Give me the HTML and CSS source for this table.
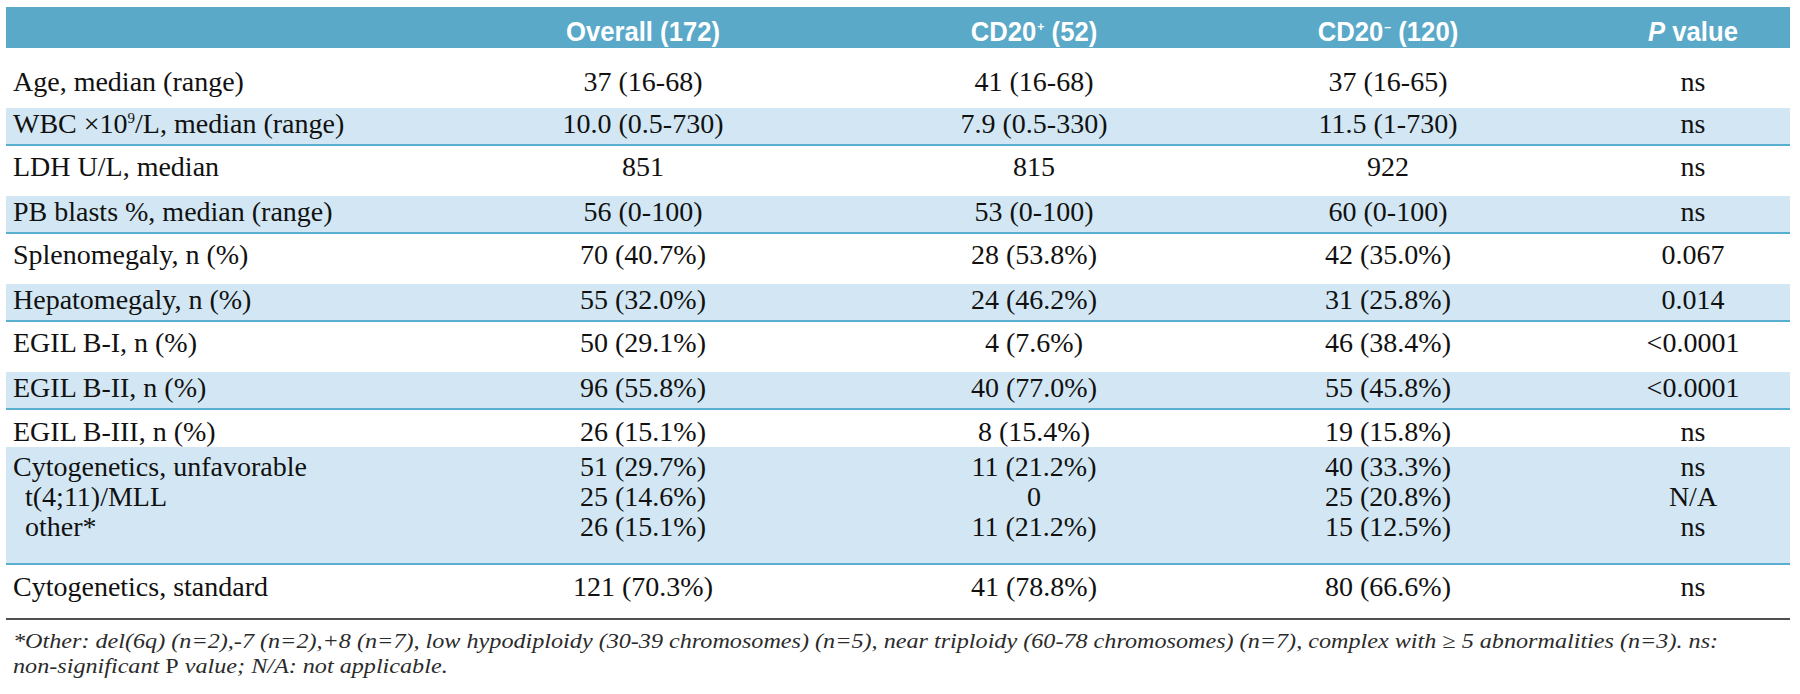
FILE: index.html
```html
<!DOCTYPE html>
<html lang="en">
<head>
<meta charset="utf-8">
<title>Table</title>
<link rel="stylesheet" href="styles.css">
</head>
<body>
<div class="page">
  <div class="tbl">
    <div class="row head">
      <div class="c lab"></div>
      <div class="c"><span class="t">Overall (172)</span></div>
      <div class="c"><span class="t">CD20<sup class="hs">+</sup> (52)</span></div>
      <div class="c"><span class="t">CD20<sup class="hs">–</sup> (120)</span></div>
      <div class="c p"><span class="t"><i>P</i> value</span></div>
    </div>

    <div class="row white first">
      <div class="c lab"><span class="t">Age, median (range)</span></div>
      <div class="c"><span class="t">37 (16-68)</span></div>
      <div class="c"><span class="t">41 (16-68)</span></div>
      <div class="c"><span class="t">37 (16-65)</span></div>
      <div class="c p"><span class="t">ns</span></div>
    </div>
    <div class="row band">
      <div class="c lab"><span class="t">WBC ×10<sup class="bs">9</sup>/L, median (range)</span></div>
      <div class="c"><span class="t">10.0 (0.5-730)</span></div>
      <div class="c"><span class="t">7.9 (0.5-330)</span></div>
      <div class="c"><span class="t">11.5 (1-730)</span></div>
      <div class="c p"><span class="t">ns</span></div>
    </div>

    <div class="row white">
      <div class="c lab"><span class="t">LDH U/L, median</span></div>
      <div class="c"><span class="t">851</span></div>
      <div class="c"><span class="t">815</span></div>
      <div class="c"><span class="t">922</span></div>
      <div class="c p"><span class="t">ns</span></div>
    </div>
    <div class="row band">
      <div class="c lab"><span class="t">PB blasts %, median (range)</span></div>
      <div class="c"><span class="t">56 (0-100)</span></div>
      <div class="c"><span class="t">53 (0-100)</span></div>
      <div class="c"><span class="t">60 (0-100)</span></div>
      <div class="c p"><span class="t">ns</span></div>
    </div>

    <div class="row white">
      <div class="c lab"><span class="t">Splenomegaly, n (%)</span></div>
      <div class="c"><span class="t">70 (40.7%)</span></div>
      <div class="c"><span class="t">28 (53.8%)</span></div>
      <div class="c"><span class="t">42 (35.0%)</span></div>
      <div class="c p"><span class="t">0.067</span></div>
    </div>
    <div class="row band">
      <div class="c lab"><span class="t">Hepatomegaly, n (%)</span></div>
      <div class="c"><span class="t">55 (32.0%)</span></div>
      <div class="c"><span class="t">24 (46.2%)</span></div>
      <div class="c"><span class="t">31 (25.8%)</span></div>
      <div class="c p"><span class="t">0.014</span></div>
    </div>

    <div class="row white">
      <div class="c lab"><span class="t">EGIL B-I, n (%)</span></div>
      <div class="c"><span class="t">50 (29.1%)</span></div>
      <div class="c"><span class="t">4 (7.6%)</span></div>
      <div class="c"><span class="t">46 (38.4%)</span></div>
      <div class="c p"><span class="t">&lt;0.0001</span></div>
    </div>
    <div class="row band">
      <div class="c lab"><span class="t">EGIL B-II, n (%)</span></div>
      <div class="c"><span class="t">96 (55.8%)</span></div>
      <div class="c"><span class="t">40 (77.0%)</span></div>
      <div class="c"><span class="t">55 (45.8%)</span></div>
      <div class="c p"><span class="t">&lt;0.0001</span></div>
    </div>

    <div class="row white short">
      <div class="c lab"><span class="t">EGIL B-III, n (%)</span></div>
      <div class="c"><span class="t">26 (15.1%)</span></div>
      <div class="c"><span class="t">8 (15.4%)</span></div>
      <div class="c"><span class="t">19 (15.8%)</span></div>
      <div class="c p"><span class="t">ns</span></div>
    </div>
    <div class="row band multi">
      <div class="c lab">
        <span class="t">Cytogenetics, unfavorable</span>
        <span class="t ind">t(4;11)/MLL</span>
        <span class="t ind">other*</span>
      </div>
      <div class="c">
        <span class="t">51 (29.7%)</span>
        <span class="t">25 (14.6%)</span>
        <span class="t">26 (15.1%)</span>
      </div>
      <div class="c">
        <span class="t">11 (21.2%)</span>
        <span class="t">0</span>
        <span class="t">11 (21.2%)</span>
      </div>
      <div class="c">
        <span class="t">40 (33.3%)</span>
        <span class="t">25 (20.8%)</span>
        <span class="t">15 (12.5%)</span>
      </div>
      <div class="c p">
        <span class="t">ns</span>
        <span class="t">N/A</span>
        <span class="t">ns</span>
      </div>
    </div>

    <div class="row white last">
      <div class="c lab"><span class="t">Cytogenetics, standard</span></div>
      <div class="c"><span class="t">121 (70.3%)</span></div>
      <div class="c"><span class="t">41 (78.8%)</span></div>
      <div class="c"><span class="t">80 (66.6%)</span></div>
      <div class="c p"><span class="t">ns</span></div>
    </div>
  </div>

  <div class="note">
    <span class="ln">*Other: del(6q) (n=2),-7 (n=2),+8 (n=7), low hypodiploidy (30-39 chromosomes) (n=5), near triploidy (60-78 chromosomes) (n=7), complex with ≥ 5 abnormalities (n=3). ns:</span>
    <span class="ln">non-significant <span class="up">P</span> value; N/A: not applicable.</span>
  </div>
</div>
</body>
</html>
```

FILE: styles.css
```css
html, body {
  margin: 0;
  padding: 0;
  background: #ffffff;
}

.page {
  padding: 7px 0 0 6px;
  width: 1784px;
}

.tbl {
  width: 1784px;
}

.row {
  display: grid;
  grid-template-columns: 442px 390px 392px 316px 244px;
  box-sizing: border-box;
}

.c {
  text-align: center;
}

.c.lab {
  text-align: left;
  padding-left: 7px;
}

.c.p {
  padding-left: 50px;
}

.t {
  display: block;
  white-space: nowrap;
}

.lab .t.ind {
  margin-left: 12px;
}

/* header */
.head {
  height: 41px;
  padding-top: 12px;
  background: #5aa9c9;
  color: #ffffff;
  font-family: "Liberation Sans", Arial, sans-serif;
  font-weight: bold;
  font-size: 27px;
  line-height: 27px;
}

.head .t {
  transform: scaleX(0.95);
  transform-origin: center;
}

.head i {
  font-style: italic;
}

.hs {
  font-size: 13px;
  line-height: 0;
  vertical-align: 10px;
  margin-left: 1px;
}

/* body rows */
.white,
.band {
  font-family: "Liberation Serif", "Times New Roman", serif;
  font-size: 28px;
  line-height: 29px;
  color: #111111;
}

.white {
  padding: 6px 0 15px;
  background: #ffffff;
}

.white.first {
  padding: 19px 0 12px;
}

.white.short {
  padding: 7px 0 1px;
}

.white.last {
  padding: 7px 0 17px;
  border-bottom: 2px solid #4f4f4f;
}

.band {
  padding: 1px 0 6px;
  background: #d2e7f3;
  border-bottom: 2px solid #5aaed1;
}

.band.multi {
  padding: 5px 0 21px;
  line-height: 30px;
}

.bs {
  font-size: 15px;
  line-height: 0;
  vertical-align: 10px;
}

/* footnote */
.note {
  padding: 9px 0 0 7px;
  font-family: "Liberation Serif", "Times New Roman", serif;
  font-style: italic;
  font-size: 21px;
  line-height: 25px;
  color: #2b2b2b;
}

.ln {
  display: block;
  width: max-content;
  white-space: nowrap;
  transform: scaleX(1.15);
  transform-origin: left center;
}

.up {
  font-style: normal;
}
```
